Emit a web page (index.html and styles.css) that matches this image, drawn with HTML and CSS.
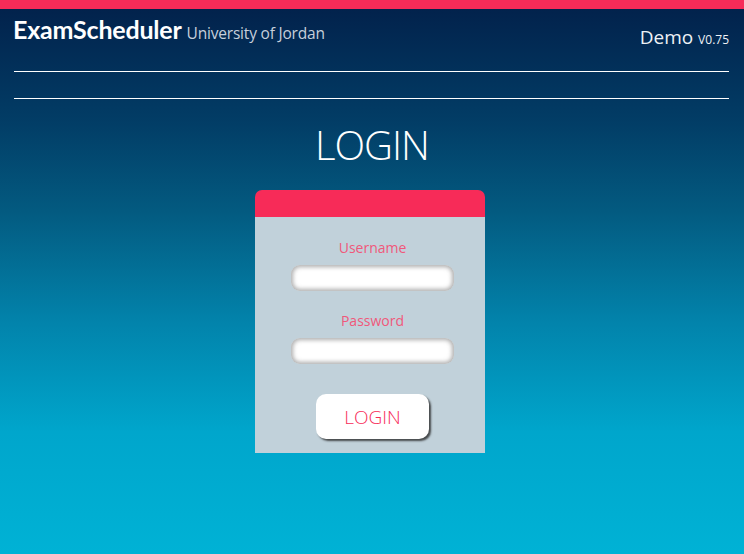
FILE: index.html
```html
<!DOCTYPE html>
<html>
<head>
<meta charset="utf-8">
<link rel="stylesheet" href="styles.css">
</head>
<body>
<div class="topbar"></div>
<header class="header">
  <div class="brand"><span class="logo">ExamScheduler</span><span class="uni">University of Jordan</span></div>
  <div class="demo">Demo <span class="ver">V0.75</span></div>
</header>
<div class="rules">
  <div class="rule"></div>
  <div class="rule"></div>
</div>
<h1 class="title">LOGIN</h1>
<div class="card">
  <div class="card-head"></div>
  <div class="card-body">
    <label class="label">Username</label>
    <div class="input"></div>
    <label class="label pw">Password</label>
    <div class="input"></div>
    <button class="btn">LOGIN</button>
  </div>
</div>
</body>
</html>
```
FILE: styles.css
```css
html, body { margin: 0; padding: 0; }
body {
  width: 744px;
  height: 554px;
  overflow: hidden;
  font-family: "Open Sans", "Liberation Sans", sans-serif;
  background: linear-gradient(180deg, #02204a 0%, #023d66 22%, #035a80 38%, #0283ab 58%, #00a6cc 78%, #00b2d5 100%);
  color: #fff;
}
.topbar { height: 9px; background: #f72b58; }
.header {
  display: flex;
  justify-content: space-between;
  align-items: flex-end;
  padding: 0 15px 0 13px;
  height: 35px;
}
.brand { display: flex; align-items: baseline; }
.logo {
  font-family: "Lato", sans-serif;
  font-weight: 700;
  font-size: 25px;
  letter-spacing: -0.2px;
  color: #fff;
  line-height: 28px;
}
.uni {
  font-size: 15.5px;
  color: #c6cfdb;
  margin-left: 5px;
  font-weight: 400;
  letter-spacing: -0.2px;
}
.demo {
  font-size: 19px;
  line-height: 20px;
  color: #eef2f6;
  margin-bottom: -6px;
}
.ver { font-size: 12px; }
.rules { padding: 27px 15px 0 14px; }
.rule { height: 1px; background: #fff; margin-bottom: 26px; }
.title {
  margin: 0;
  text-align: center;
  font-family: "Open Sans", sans-serif;
  font-weight: 300;
  font-size: 40px;
  letter-spacing: -1px;
  line-height: 40px;
  color: #fff;
}
.card {
  width: 230px;
  margin: 25px 0 0 calc(50% - 117px);
}
.card-head {
  height: 27px;
  background: #f72b58;
  border-radius: 7px 7px 0 0;
}
.card-body {
  background: #c1d1da;
  height: 236px;
  display: flex;
  flex-direction: column;
  align-items: center;
  padding: 21px 0 0 5px;
  box-sizing: border-box;
}
.label {
  color: #f0587a;
  font-size: 14px;
  line-height: 20px;
  margin-bottom: 7px;
}
.label.pw { margin-top: 20px; }
.input {
  width: 163px;
  height: 26px;
  background: #fff;
  border-radius: 9px;
  box-shadow: inset 0 0 4px 2px rgba(140,140,140,0.7);
}
.btn {
  margin-top: 30px;
  width: 113px;
  height: 45px;
  background: #fff;
  border: none;
  border-radius: 10px;
  box-shadow: 2px 2px 2px rgba(40,40,40,0.8);
  color: #f72b58;
  font-family: "Open Sans", sans-serif;
  font-size: 19px;
  font-weight: 300;
  padding: 0;
}
```
